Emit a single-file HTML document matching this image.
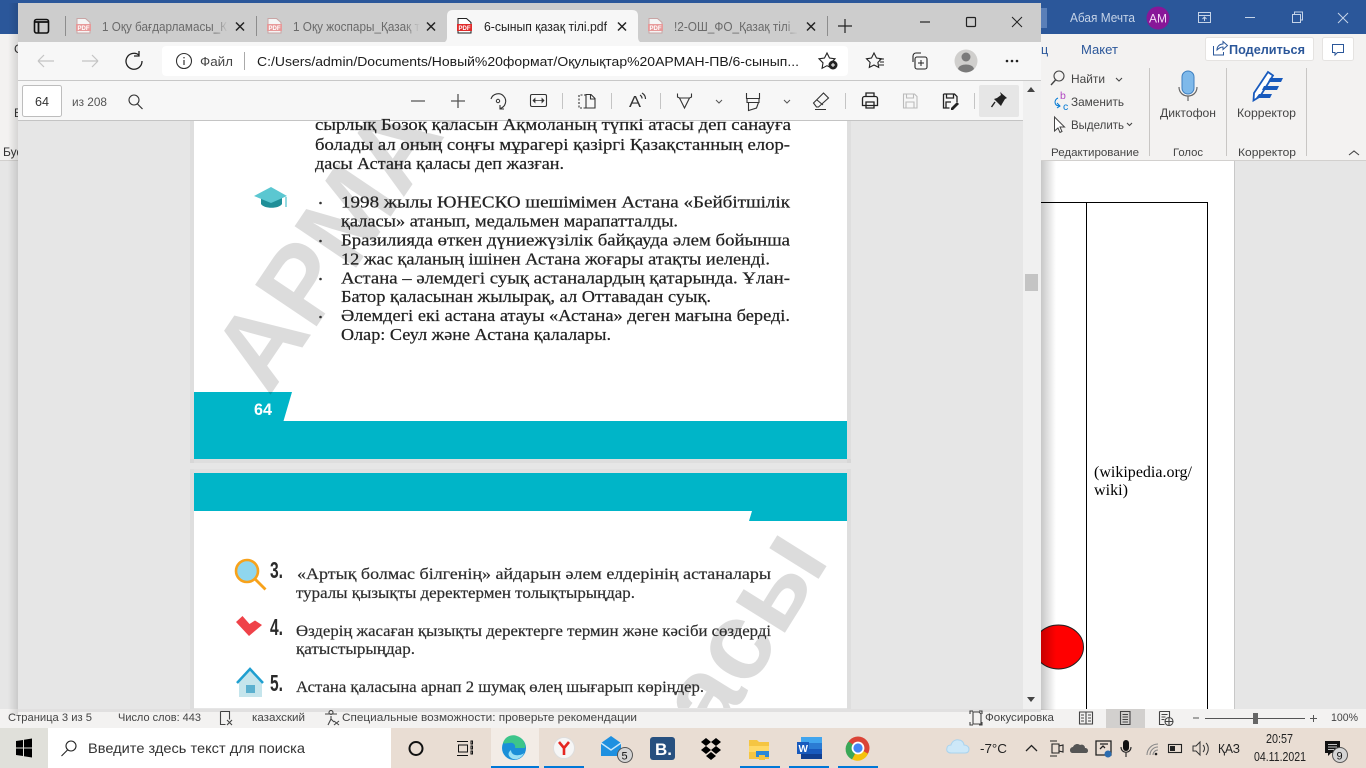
<!DOCTYPE html>
<html lang="ru"><head><meta charset="utf-8"><title>6-сынып қазақ тілі.pdf</title>
<style>
html,body{margin:0;padding:0;width:1366px;height:768px;overflow:hidden;background:#e6e6e6}
svg{display:block;position:absolute;left:0;top:0}
text{font-family:"Liberation Sans","DejaVu Sans",sans-serif;fill:#333;font-size:12px}
.s{font-family:"Liberation Serif","DejaVu Serif",serif;font-size:17px;fill:#222;stroke:#222;stroke-width:.22px;filter:blur(.3px)}
.s2{font-family:"Liberation Serif","DejaVu Serif",serif;font-size:16px;fill:#2c2c2c;stroke:#2c2c2c;stroke-width:.2px;filter:blur(.3px)}
.n{font-weight:bold;font-size:23px;fill:#2b2b2b}
.u{font-size:12px;fill:#444}
.st{font-size:11px;fill:#444}
.tab{font-size:12.5px;fill:#6a6a6a}
.i{fill:none;stroke:#333;stroke-width:1.2}
.il{fill:none;stroke:#444;stroke-width:1.1}
</style></head><body>
<svg width="1366" height="768" viewBox="0 0 1366 768" xmlns="http://www.w3.org/2000/svg">
<defs>
<linearGradient id="sh" x1="0" x2="1" y1="0" y2="0"><stop offset="0" stop-color="#000" stop-opacity=".22"/><stop offset="1" stop-color="#000" stop-opacity="0"/></linearGradient>
<linearGradient id="shl" x1="1" x2="0" y1="0" y2="0"><stop offset="0" stop-color="#000" stop-opacity=".12"/><stop offset="1" stop-color="#000" stop-opacity="0"/></linearGradient>
<linearGradient id="fade" x1="0" x2="1" y1="0" y2="0"><stop offset="0" stop-color="#cdcdcd" stop-opacity="0"/><stop offset="1" stop-color="#cdcdcd"/></linearGradient>
<clipPath id="p1"><rect x="194" y="121" width="653" height="338"/></clipPath>
<clipPath id="p2"><rect x="194" y="473" width="653" height="235"/></clipPath>
</defs>

<!-- Word window background -->
<rect x="0" y="0" width="1366" height="34" fill="#2b579a"/>
<rect x="0" y="34" width="1366" height="126" fill="#f3f2f1"/>
<rect x="0" y="160" width="1366" height="1" fill="#d2d0ce"/>
<rect x="0" y="161" width="1366" height="548" fill="#e6e6e6"/>
<rect x="1041" y="161" width="193" height="548" fill="#fff"/>
<rect x="1234" y="161" width="1" height="548" fill="#c8c8c8"/>
<text x="3" y="156" style="font-size:12px">Буф</text>
<text x="14" y="53" style="font-size:12px">С</text>
<text x="14" y="117" style="font-size:12px">Е</text>

<!-- Word title bar -->
<rect x="1041" y="8" width="6" height="20" fill="#5a7fb8"/>
<text x="1070" y="22" textLength="65" lengthAdjust="spacingAndGlyphs" style="fill:#c6d4e8;font-size:12.5px">Абая Мечта</text>
<circle cx="1158" cy="18" r="11.5" fill="#881798"/>
<text x="1149" y="22.5" textLength="18" lengthAdjust="spacingAndGlyphs" style="fill:#f3dcf5;font-size:11.5px">АМ</text>
<g fill="none" stroke="#c6d4e8" stroke-width="1">
<rect x="1198.5" y="12.5" width="12" height="10"/><path d="M1198.5 15.5h12M1204.5 21v-4M1202.5 19l2-2 2 2"/>
<path d="M1245 17.5h10"/>
<rect x="1292.5" y="14.5" width="8" height="8"/><path d="M1294.5 14.5v-2.5h8v8h-2"/>
<path d="M1338 13l10 10M1348 13l-10 10"/>
</g>

<!-- Word ribbon -->
<text x="1041" y="54" style="fill:#2b579a;font-size:12.5px">ц</text>
<text x="1081" y="54" textLength="37" lengthAdjust="spacingAndGlyphs" style="fill:#2b579a;font-size:12.5px">Макет</text>
<rect x="1205.5" y="37.5" width="108" height="23" rx="2" fill="#fff" stroke="#e5e3e1"/>
<path d="M1213.5 46v9h10v-3M1217 50c0-4 3-6 6-6v-2.5l4.500 4-4.500 4V47c-2 0-4 1-6 3z" fill="none" stroke="#2b579a" stroke-width="1"/>
<text x="1229" y="54" textLength="76" lengthAdjust="spacingAndGlyphs" style="fill:#2b579a;font-size:12.5px;font-weight:bold">Поделиться</text>
<rect x="1322.5" y="37.5" width="31" height="23" rx="2" fill="#fff" stroke="#e5e3e1"/>
<path d="M1332.5 44.5h11v8h-6l-2.500 2.500v-2.500h-2.500z" fill="none" stroke="#2b579a" stroke-width="1"/>

<circle cx="1059" cy="76" r="5" fill="none" stroke="#444" stroke-width="1.100"/><path d="M1055.500 80l-4.500 5" stroke="#444" stroke-width="1.400" fill="none"/>
<text x="1071" y="83" textLength="34" lengthAdjust="spacingAndGlyphs" class="u">Найти</text>
<path d="M1116 78l3 3 3-3" class="il"/>
<text x="1060" y="99" style="fill:#b146c2;font-size:10.500px">b</text>
<text x="1063" y="110" style="fill:#0078d4;font-size:10.500px">c</text>
<path d="M1058 98a5 5 0 0 0-3 4c0 3 2 4 5 4M1057 103l3 3-3 2" fill="none" stroke="#0078d4" stroke-width="1"/>
<text x="1071" y="106" textLength="53" lengthAdjust="spacingAndGlyphs" class="u">Заменить</text>
<path d="M1054.500 117v14l3.500-3 2 4.500 2-1-2-4.500h4.500z" fill="#fff" stroke="#444" stroke-width="1"/>
<text x="1071" y="129" textLength="53" lengthAdjust="spacingAndGlyphs" class="u">Выделить</text>
<path d="M1127 123l2.500 2.500 2.500-2.500" class="il"/>
<text x="1051" y="156" textLength="88" lengthAdjust="spacingAndGlyphs" style="font-size:11px;fill:#444">Редактирование</text>
<text x="1173" y="156" textLength="30" lengthAdjust="spacingAndGlyphs" style="font-size:11px;fill:#444">Голос</text>
<text x="1238" y="156" textLength="58" lengthAdjust="spacingAndGlyphs" style="font-size:11px;fill:#444">Корректор</text>
<rect x="1149" y="68" width="1" height="88" fill="#c8c6c4"/><rect x="1226" y="68" width="1" height="88" fill="#c8c6c4"/><rect x="1306" y="68" width="1" height="88" fill="#c8c6c4"/>
<rect x="1182" y="71" width="12" height="23" rx="6" fill="#7eb9ea" stroke="#3d7fc0" stroke-width="1"/>
<path d="M1179 87c0 12 18 12 18 0M1188 96v5" fill="none" stroke="#666" stroke-width="1.200"/>
<text x="1160" y="117" textLength="56" lengthAdjust="spacingAndGlyphs" class="u">Диктофон</text>
<path d="M1268 72l5 3.500-13 21-6.500 4 .5-7.500z" fill="#fff" stroke="#185abd" stroke-width="1.800"/>
<path d="M1270 78h13l-2 4h-13zM1264 86h15l-2 4h-15zM1259 94h13l-2 4h-14z" fill="#185abd"/>
<text x="1237" y="117" textLength="59" lengthAdjust="spacingAndGlyphs" class="u">Корректор</text>
<path d="M1349 155l5-4 5 4" class="il"/>

<!-- Word document -->
<path d="M1041 202.500H1207.500V709M1086.500 202.500V709" fill="none" stroke="#000" stroke-width="1"/>
<text x="1094" y="477" textLength="98" lengthAdjust="spacingAndGlyphs" style="font-family:'Liberation Serif',serif;font-size:16px;fill:#000">(wikipedia.org/</text>
<text x="1094" y="495" textLength="34" lengthAdjust="spacingAndGlyphs" style="font-family:'Liberation Serif',serif;font-size:16px;fill:#000">wiki)</text>
<ellipse cx="1058.500" cy="647" rx="25" ry="22" fill="#f00" stroke="#222" stroke-width="1"/>

<!-- Status bar -->
<rect x="0" y="709" width="1366" height="19" fill="#f3f2f1"/>
<text x="8" y="721" textLength="84" lengthAdjust="spacingAndGlyphs" class="st">Страница 3 из 5</text>
<text x="118" y="721" textLength="83" lengthAdjust="spacingAndGlyphs" class="st">Число слов: 443</text>
<path d="M220.500 711.500h9v8M220.500 711.500v13h5M227 720l5 5M232 720l-5 5" class="il"/>
<text x="252" y="721" textLength="53" lengthAdjust="spacingAndGlyphs" class="st">казахский</text>
<circle cx="331" cy="712.500" r="2" class="il"/><path d="M325 714h12M331 716v3l-3 6M331 719l3 3M334 721l5 4M339 721l-5 4" class="il"/>
<text x="342" y="721" textLength="295" lengthAdjust="spacingAndGlyphs" class="st">Специальные возможности: проверьте рекомендации</text>
<path d="M970 714v-3h3M970 722v3h3M982 722v3h-3M982 714v-3h-3M973 712h6l2 2v10h-8z" class="il"/>
<text x="985" y="721" textLength="69" lengthAdjust="spacingAndGlyphs" class="st">Фокусировка</text>
<path d="M1079.500 712h6.500v12h-6.500zM1086 712h6.500v12H1086zM1081 715h3M1081 718h3M1081 721h3M1088 715h3M1088 718h3M1088 721h3" class="il"/>
<rect x="1106" y="709" width="39" height="19" fill="#d2d0ce"/>
<path d="M1120.500 711.500h9.500v13h-9.500zM1122.500 714.500h5.500M1122.500 717h5.500M1122.500 719.500h5.500M1122.500 722h5.500" class="il"/>
<path d="M1159.500 711.500h10v6M1159.500 711.500v13h5M1161.500 714.500h6M1161.500 717h4M1161.500 719.500h3" class="il"/><circle cx="1169" cy="721.500" r="4" class="il"/><path d="M1165 721.500h8M1169 717.500v8" class="il"/>
<path d="M1193 718h6M1205 718.500h100M1310 718.500h7M1313.500 715v7" stroke="#555" fill="none" stroke-width="1"/>
<rect x="1253" y="713" width="5" height="11" fill="#666"/>
<text x="1331" y="721" textLength="27" lengthAdjust="spacingAndGlyphs" class="st">100%</text>

<!-- Taskbar -->
<rect x="0" y="728" width="1366" height="40" fill="#e9ddd3"/>
<rect x="0" y="728" width="48" height="40" fill="#e0e0da"/>
<rect x="48" y="728" width="343" height="40" fill="#fff"/>
<path d="M16 741l7-1v7.500h-7zM24 739.800l8-1.300v9h-8zM16 748.500h7v7.500l-7-1zM24 748.500h8v9l-8-1.300z" fill="#000"/>
<circle cx="71" cy="746" r="5" fill="none" stroke="#222" stroke-width="1.100"/><path d="M67.500 750l-6 6" stroke="#222" stroke-width="1.100"/>
<text x="88" y="753" textLength="217" lengthAdjust="spacingAndGlyphs" style="font-size:14px;fill:#333">Введите здесь текст для поиска</text>
<circle cx="416" cy="748.500" r="6.500" fill="none" stroke="#111" stroke-width="2"/>
<path d="M457 741.500h11M457 755.500h11M458.500 745h9v7h-9zM471 741h1.500v3H471zM471 746h1.500v3H471zM471 751h1.500v3H471z" fill="none" stroke="#111" stroke-width="1"/>
<rect x="491" y="728" width="48" height="40" fill="#f3ece6"/>
<rect x="491" y="766" width="48" height="2" fill="#0078d7"/>
<rect x="544" y="766" width="40" height="2" fill="#0078d7"/>
<rect x="740" y="766" width="40" height="2" fill="#0078d7"/>
<rect x="789" y="766" width="40" height="2" fill="#0078d7"/>
<rect x="838" y="766" width="40" height="2" fill="#0078d7"/>
<circle cx="514" cy="748" r="12" fill="#1b8fd8"/>
<path d="M503 743c2-7 9-9 14-7 6 2 9 7 8 12h-10c1-3-2-6-5-5-3 0-6 1-7 0z" fill="#3dc58a"/>
<path d="M511 750c0 4 4 6 8 5 2 0 4-1 5-2-2 5-7 7-11 6-5-2-6-6-2-9z" fill="#9be0f5"/>
<circle cx="564" cy="748" r="10.500" fill="#f6f6f6" stroke="#ddd"/>
<path d="M559 742l5 6v7M569 742l-5 6" fill="none" stroke="#e52620" stroke-width="2.600"/>
<path d="M601 743l10-7 10 7v13h-20z" fill="#1e90e0"/>
<path d="M601 743l10 7 10-7" fill="none" stroke="#c9e8fb" stroke-width="1.400"/>
<circle cx="625" cy="755" r="7.500" fill="#d5d5d5" stroke="#555"/>
<text x="621.500" y="759.500" style="font-size:11px;fill:#111">5</text>
<rect x="650" y="737" width="25" height="23" rx="3" fill="#27507f"/>
<text x="655" y="755" style="font-size:17px;font-weight:bold;fill:#fff">B.</text>
<path d="M701 742l5-4 5 4-5 4zM711 742l5-4 5 4-5 4zM701 750l5-4 5 4-5 4zM711 750l5-4 5 4-5 4zM706 756l5-4 5 4-5 4z" fill="#000"/>
<path d="M749 740h8l2 2h10v17h-20z" fill="#f5c542"/>
<rect x="749" y="746" width="20" height="6" fill="#ffd966"/>
<rect x="756" y="751" width="13" height="6" fill="#2b88d8"/><rect x="759" y="755" width="6" height="5" fill="#f5c542"/>
<rect x="801" y="737" width="21" height="22" fill="#2b7cd3"/>
<rect x="801" y="737" width="21" height="6" fill="#41a5ee"/><rect x="801" y="749" width="21" height="5" fill="#185abd"/><rect x="801" y="754" width="21" height="5" fill="#103f91"/>
<rect x="797" y="742" width="12" height="12" fill="#185abd"/>
<text x="798.500" y="752" style="font-size:10px;font-weight:bold;fill:#fff">W</text>
<circle cx="858" cy="748" r="11.500" fill="#db4437"/>
<path d="M858 748l10 5.800a11.500 11.500 0 0 1-16 5.600z" fill="#f4c20d"/>
<path d="M858 748l-6 11.500a11.500 11.500 0 0 1-3.500-18z" fill="#3aa757"/>
<circle cx="858" cy="748" r="5.500" fill="#4285f4" stroke="#fff" stroke-width="1.800"/>
<path d="M951 753c-3 0-5-2-4-5 0-2 2-3 4-3 1-4 5-6 8-5 3 0 5 3 5 5 3 0 5 2 5 4 0 3-2 4-4 4z" fill="#cde8f8" stroke="#a9d3ee"/>
<text x="980" y="753" textLength="27" lengthAdjust="spacingAndGlyphs" style="font-size:13px;fill:#222">-7°C</text>
<path d="M1026 751l5.500-5.500 5.500 5.500" fill="none" stroke="#222" stroke-width="1.300"/>
<path d="M1050 741h7M1050 756h7M1052 744h7v9h-7zM1059 746l4-1v7l-4-1z" fill="none" stroke="#222" stroke-width="1.100"/>
<path d="M1073 753c-2 0-3-1-3-3s2-3 3-3c1-3 5-4 7-2 2-1 5 0 5 3 2 0 3 1 3 3 0 1-1 2-2 2z" fill="#555"/>
<path d="M1096 741h15v14h-15zM1100 744h8M1100 749l3-3 2 2" fill="none" stroke="#222" stroke-width="1.300"/><circle cx="1108" cy="754" r="3.500" fill="#2b6cb0"/>
<rect x="1123" y="740" width="6" height="11" rx="3" fill="#111"/><path d="M1121 747c0 7 10 7 10 0M1126 752v5" fill="none" stroke="#222" stroke-width="1.100"/>
<path d="M1147 755a11 11 0 0 1 11-11M1150 755a8 8 0 0 1 8-8M1153 755a5 5 0 0 1 5-5" fill="none" stroke="#888" stroke-width="1.100"/><circle cx="1156" cy="754" r="1.300" fill="#222"/>
<rect x="1168.500" y="744.500" width="13" height="8" fill="none" stroke="#222" stroke-width="1.100"/><rect x="1170" y="746" width="5" height="5" fill="#222"/>
<path d="M1193 746h3l4-4v13l-4-4h-3zM1203 745c2 2 2 5 0 7M1206 743c3 3 3 8 0 12" fill="none" stroke="#333" stroke-width="1"/>
<text x="1218" y="753" textLength="22" lengthAdjust="spacingAndGlyphs" style="font-size:12.500px;fill:#222">ҚАЗ</text>
<text x="1266" y="743" textLength="27" lengthAdjust="spacingAndGlyphs" style="font-size:12.500px;fill:#222">20:57</text>
<text x="1254" y="761" textLength="52" lengthAdjust="spacingAndGlyphs" style="font-size:12.500px;fill:#222">04.11.2021</text>
<path d="M1325 741h15v12h-9l-3 3v-3h-3z" fill="#111"/><path d="M1328 744.500h9M1328 747h9M1328 749.500h6" stroke="#fff" stroke-width=".8"/>
<circle cx="1340" cy="755" r="7.500" fill="#d5d5d5" stroke="#555"/>
<text x="1336.500" y="759.500" style="font-size:11px;fill:#111">9</text>

<!-- Edge window -->
<rect x="8" y="3" width="10" height="712" fill="url(#shl)"/>
<rect x="18" y="3" width="1023" height="40" fill="#cdcdcd"/>
<rect x="18" y="42" width="1023" height="39" fill="#f7f7f7"/>
<rect x="18" y="80" width="1023" height="1" fill="#c8c8c8"/>
<rect x="18" y="81" width="1023" height="39" fill="#f7f7f7"/>
<rect x="18" y="120" width="1023" height="1" fill="#c4c4c4"/>
<rect x="18" y="121" width="1023" height="588" fill="#e6e6e6"/>
<rect x="1023" y="81" width="18" height="628" fill="#f0f0f0"/>
<rect x="1041" y="161" width="15" height="549" fill="url(#sh)"/>
<rect x="18" y="709" width="1023" height="3" fill="#000" opacity=".07"/>
<path d="M1027 92l4-5 4 5z" fill="#444"/>
<rect x="1025" y="274" width="13" height="17" fill="#c4c4c4"/>
<path d="M1027 697l4 5 4-5z" fill="#444"/>

<!-- Tabs -->
<rect x="34.500" y="19.500" width="14" height="13.500" rx="2" fill="none" stroke="#111" stroke-width="1.600"/>
<path d="M34.500 22h14M38.500 22v11" fill="none" stroke="#111" stroke-width="1.800"/>
<rect x="65" y="16" width="1" height="20" fill="#8d8d8d"/>
<path d="M77 18.500h8.500l4.500 4v10.500h-13z" fill="#f5f5f5" stroke="#c9a5a5"/><rect x="76" y="24" width="15" height="7" fill="#e79a9a"/><text x="77.500" y="30" style="font-size:6px;font-weight:bold;fill:#fff">PDF</text>
<text x="102" y="31" textLength="125" lengthAdjust="spacingAndGlyphs" class="tab">1 Оқу бағдарламасы_К</text>
<rect x="215" y="16" width="13" height="20" fill="url(#fade)"/>
<path d="M236 22.500l8 8M244 22.500l-8 8" stroke="#222" stroke-width="1.500"/>
<rect x="256" y="16" width="1" height="20" fill="#8d8d8d"/>
<path d="M268 18.500h8.500l4.500 4v10.500h-13z" fill="#f5f5f5" stroke="#c9a5a5"/><rect x="267" y="24" width="15" height="7" fill="#e79a9a"/><text x="268.500" y="30" style="font-size:6px;font-weight:bold;fill:#fff">PDF</text>
<text x="293" y="31" textLength="127" lengthAdjust="spacingAndGlyphs" class="tab">1 Оқу жоспары_Қазақ т</text>
<rect x="405" y="16" width="15" height="20" fill="url(#fade)"/>
<path d="M427 22.500l8 8M435 22.500l-8 8" stroke="#222" stroke-width="1.500"/>
<path d="M441 43c4 0 6-2 6-6V16c0-4 2-6 6-6h179c4 0 6 2 6 6v21c0 4 2 6 6 6z" fill="#f7f7f7"/>
<path d="M458 18.500h8.500l4.500 4v10.500h-13z" fill="#fff" stroke="#222"/><rect x="457" y="24" width="15" height="7" fill="#e02b2b"/><text x="458.500" y="30" style="font-size:6px;font-weight:bold;fill:#fff">PDF</text>
<text x="484" y="31" textLength="123" lengthAdjust="spacingAndGlyphs" style="font-size:12.500px;fill:#222">6-сынып қазақ тілі.pdf</text>
<path d="M618 22.500l8 8M626 22.500l-8 8" stroke="#222" stroke-width="1.500"/>
<path d="M649 18.500h8.500l4.500 4v10.500h-13z" fill="#f5f5f5" stroke="#c9a5a5"/><rect x="648" y="24" width="15" height="7" fill="#e79a9a"/><text x="649.500" y="30" style="font-size:6px;font-weight:bold;fill:#fff">PDF</text>
<text x="674" y="31" textLength="123" lengthAdjust="spacingAndGlyphs" class="tab">!2-ОШ_ФО_Қазақ тілі_</text>
<rect x="785" y="16" width="13" height="20" fill="url(#fade)"/>
<path d="M807 22.500l8 8M815 22.500l-8 8" stroke="#222" stroke-width="1.500"/>
<rect x="827" y="16" width="1" height="20" fill="#8d8d8d"/>
<path d="M838 26h14M845 19v14" stroke="#222" stroke-width="1.200"/>
<path d="M920 22h10" stroke="#222" stroke-width="1.200"/>
<rect x="966.500" y="17.500" width="9" height="9" rx="1" fill="none" stroke="#222" stroke-width="1.200"/>
<path d="M1012 17l10 10M1022 17l-10 10" stroke="#222" stroke-width="1"/>

<!-- Address bar -->
<rect x="162" y="46" width="686" height="30" rx="4" fill="#fff"/>
<path d="M38 61h16M38 61l6-6M38 61l6 6" fill="none" stroke="#c4c4c4" stroke-width="1.200"/>
<path d="M98 61H82M98 61l-6-6M98 61l-6 6" fill="none" stroke="#c4c4c4" stroke-width="1.200"/>
<path d="M139 55a8 8 0 1 0 3 6M139 51v5h-5" fill="none" stroke="#222" stroke-width="1.300"/>
<circle cx="184" cy="61" r="7.500" fill="none" stroke="#333" stroke-width="1.100"/><path d="M184 60v5M184 57v1.400" stroke="#333" stroke-width="1.200"/>
<text x="200" y="66" textLength="33" lengthAdjust="spacingAndGlyphs" style="font-size:12.500px;fill:#444">Файл</text>
<rect x="244" y="52" width="1" height="18" fill="#aaa"/>
<text x="257" y="66" textLength="542" lengthAdjust="spacingAndGlyphs" style="font-size:12.500px;fill:#1c1c1c">C:/Users/admin/Documents/Новый%20формат/Оқулықтар%20АРМАН-ПВ/6-сынып...</text>
<path d="M827 53l2.500 5 5.500 .8-4 4 .9 5.500-4.900-2.600-4.900 2.600 .9-5.500-4-4 5.500-.8z" fill="none" stroke="#222" stroke-width="1.100"/><circle cx="833" cy="65" r="4.500" fill="#222"/><path d="M831 65h4M833 63v4" stroke="#fff"/>
<path d="M874 53l2.500 5 5 .8-3.600 3.600 .8 5-4.700-2.400-4.700 2.400 .8-5-3.600-3.600 5-.8z" fill="none" stroke="#222" stroke-width="1.100"/><path d="M879 59h5M880 62h4M879 65h5" stroke="#222"/>
<path d="M913 62v-6a3 3 0 0 1 3-3h5" fill="none" stroke="#222" stroke-width="1.100"/><rect x="915" y="57" width="12" height="12" rx="2" fill="none" stroke="#222" stroke-width="1.100"/><path d="M921 60v6M918 63h6" stroke="#222"/>
<circle cx="966" cy="61" r="11.500" fill="#d0cfcd"/><circle cx="966" cy="57" r="4.500" fill="#7a7a7a"/><path d="M958 69c1-6 15-6 16 0a11 11 0 0 1-16 0z" fill="#7a7a7a"/>
<circle cx="1007" cy="61" r="1.300" fill="#222"/><circle cx="1012" cy="61" r="1.300" fill="#222"/><circle cx="1017" cy="61" r="1.300" fill="#222"/>

<!-- PDF toolbar -->
<rect x="22.500" y="85.500" width="39" height="31" rx="2" fill="#fff" stroke="#bdbdbd"/>
<text x="35" y="106" textLength="14" lengthAdjust="spacingAndGlyphs" style="font-size:12.500px;fill:#333">64</text>
<text x="72" y="106" textLength="35" lengthAdjust="spacingAndGlyphs" style="font-size:12px;fill:#555">из 208</text>
<circle cx="134" cy="100" r="5" fill="none" stroke="#333" stroke-width="1.100"/><path d="M137.500 104l5 5" stroke="#333" stroke-width="1.200"/>
<path d="M411 101h14M451 101h14M458 94v14" stroke="#555" stroke-width="1.300"/>
<path d="M491 99a7.500 7.500 0 1 1 9 9.500M500 105v4h4" fill="none" stroke="#333" stroke-width="1.100"/><circle cx="498" cy="101" r="1.700" fill="none" stroke="#333"/>
<rect x="530.500" y="94.500" width="16" height="12" rx="1.500" fill="none" stroke="#333" stroke-width="1.100"/><path d="M533 100.500h11M533 100.500l2-2v4zM544 100.500l-2-2v4z" fill="#333" stroke="#333" stroke-width=".8"/>
<path d="M562.500 93v16M611.500 93v16M660.500 93v16M845.500 93v16M974.500 93v16" stroke="#c4c4c4"/>
<path d="M586 95h-7v13h7" fill="none" stroke="#333" stroke-dasharray="2 1.500" stroke-width="1.100"/><path d="M586 94.500h5l4 4v9.500h-9zM590.500 94.500v4.500h4.500" fill="none" stroke="#333" stroke-width="1.100"/>
<text x="629" y="107" style="font-size:16px;fill:#333" textLength="12" lengthAdjust="spacingAndGlyphs">A</text>
<path d="M640 95c1.500 1 2 2 2 3.500M642 93c2.500 1.500 3.500 3.500 3.500 6" fill="none" stroke="#333" stroke-width="1.200"/>
<path d="M677.500 93.500v3.500l2 1h10l2-1v-3.500M679.500 98l5 10 5-10" fill="none" stroke="#333" stroke-width="1.100"/>
<path d="M716 100l3 3 3-3M784 100l3 3 3-3" fill="none" stroke="#555"/>
<path d="M746.500 93v5.500h13V93M747 98.500v4h12v-4M748.500 102.500v8l8-2.500 2-5.500" fill="none" stroke="#333" stroke-width="1.100"/>
<path d="M813.500 103l10-10 5 5-10 9h-2zM817 100l6 5M815 109.500h11" fill="none" stroke="#333" stroke-width="1.100"/>
<path d="M866 96v-3h8v3M862.500 98.500a2 2 0 0 1 2-2h11a2 2 0 0 1 2 2v7h-15zM866 102h8v6h-8z" fill="none" stroke="#222" stroke-width="1.300"/>
<path d="M903.500 94h11l2.500 2.500V108h-13.500zM906.500 94v4h7v-4M906 108v-6h8v6" fill="none" stroke="#bbb" stroke-width="1.100"/>
<path d="M943.500 94h11l2.500 2.500V102M943.500 94v14h6M946.500 94v4h7v-4M946 108v-6h5" fill="none" stroke="#222" stroke-width="1.300"/>
<path d="M951 108l6-6 2 2-6 6h-2z" fill="#222"/>
<rect x="979" y="85" width="40" height="32" rx="2" fill="#e6e6e6"/>
<path d="M1000 92l7 6-2 1-3 5-1 2-7-7 3-1 4-3z" fill="#222"/><path d="M995 102l-3.500 5" stroke="#222" stroke-width="1.400"/>

<!-- PDF page 1 -->
<rect x="190" y="121" width="4" height="342" fill="#000" opacity=".03"/>
<rect x="847" y="121" width="4" height="342" fill="#000" opacity=".03"/>
<rect x="190" y="459" width="661" height="4" fill="#000" opacity=".03"/>
<rect x="194" y="121" width="653" height="338" fill="#fff"/>
<path d="M194 392H292L283.500 421H847V459H194z" fill="#00b5c8"/>
<g clip-path="url(#p1)"><text transform="translate(269 397) rotate(-56)" style="font-size:108px;font-weight:bold;fill:#000;opacity:.135">АРМАН</text></g>
<text x="254" y="415" textLength="18" lengthAdjust="spacingAndGlyphs" style="font-size:17px;font-weight:bold;fill:#fff">64</text>
<text class="s" x="315" y="130" textLength="476" lengthAdjust="spacingAndGlyphs">сырлық Бозоқ қаласын Ақмоланың түпкі атасы деп санауға</text>
<text class="s" x="315" y="150" textLength="475" lengthAdjust="spacingAndGlyphs">болады ал оның соңғы мұрагері қазіргі Қазақстанның елор-</text>
<text class="s" x="315" y="169" textLength="249" lengthAdjust="spacingAndGlyphs">дасы Астана қаласы деп жазған.</text>
<path d="M261 196v8c3 5 18 5 21 0v-8z" fill="#1f8f98"/>
<path d="M254 196l17-9 16 9-16 7z" fill="#5bc7d1"/><path d="M286 197v10" stroke="#5bc7d1" stroke-width="1.300"/>
<g fill="#333"><circle cx="320.500" cy="203" r="1.300"/><circle cx="320.500" cy="241" r="1.300"/><circle cx="320.500" cy="279" r="1.300"/><circle cx="320.500" cy="317" r="1.300"/></g>
<text class="s" x="341" y="207.500" textLength="449" lengthAdjust="spacingAndGlyphs">1998 жылы ЮНЕСКО шешімімен Астана «Бейбітшілік</text>
<text class="s" x="341" y="226.500" textLength="337" lengthAdjust="spacingAndGlyphs">қаласы» атанып, медальмен марапатталды.</text>
<text class="s" x="341" y="245.500" textLength="449" lengthAdjust="spacingAndGlyphs">Бразилияда өткен дүниежүзілік байқауда әлем бойынша</text>
<text class="s" x="341" y="264.500" textLength="429" lengthAdjust="spacingAndGlyphs">12 жас қаланың ішінен Астана жоғары атақты иеленді.</text>
<text class="s" x="341" y="283.500" textLength="449" lengthAdjust="spacingAndGlyphs">Астана – әлемдегі суық астаналардың қатарында. Ұлан-</text>
<text class="s" x="341" y="302" textLength="370" lengthAdjust="spacingAndGlyphs">Батор қаласынан жылырақ, ал Оттавадан суық.</text>
<text class="s" x="341" y="321" textLength="449" lengthAdjust="spacingAndGlyphs">Әлемдегі екі астана атауы «Астана» деген мағына береді.</text>
<text class="s" x="341" y="340" textLength="270" lengthAdjust="spacingAndGlyphs">Олар: Сеул және Астана қалалары.</text>

<!-- PDF page 2 -->
<rect x="190" y="469" width="4" height="240" fill="#000" opacity=".03"/>
<rect x="847" y="469" width="4" height="240" fill="#000" opacity=".03"/>
<rect x="194" y="469" width="653" height="4" fill="#000" opacity=".02"/>
<rect x="194" y="473" width="653" height="235" fill="#fff"/>
<path d="M194 473H847V521H749L752 511H194z" fill="#00b5c8"/>
<g clip-path="url(#p2)"><text transform="translate(716 743) rotate(-58)" style="font-size:110px;font-weight:bold;fill:#000;opacity:.135">асы</text></g>
<circle cx="247" cy="571" r="11" fill="#8fd6ee" stroke="#f7a21b" stroke-width="2.600"/><path d="M255 579l10.500 10.500" stroke="#f7a21b" stroke-width="2.800"/>
<text class="n" x="270" y="578" textLength="13" lengthAdjust="spacingAndGlyphs">3.</text>
<text class="s2" x="297" y="579" textLength="474" lengthAdjust="spacingAndGlyphs">«Артық болмас білгенің» айдарын әлем елдерінің астаналары</text>
<text class="s2" x="296" y="598" textLength="339" lengthAdjust="spacingAndGlyphs">туралы қызықты деректермен толықтырыңдар.</text>
<path d="M236 622l6.500-6 7 8 5.500-3.500 7 4.500-13 11z" fill="#ef4249"/>
<text class="n" x="270" y="635" textLength="13" lengthAdjust="spacingAndGlyphs">4.</text>
<text class="s2" x="296" y="636" textLength="475" lengthAdjust="spacingAndGlyphs">Өздерің жасаған қызықты деректерге термин және кәсіби сөздерді</text>
<text class="s2" x="296" y="654" textLength="119" lengthAdjust="spacingAndGlyphs">қатыстырыңдар.</text>
<rect x="239" y="681" width="23" height="16" fill="#c5e5ec"/><path d="M239 681l11-11 12 11v2h-23z" fill="#c5e5ec"/>
<rect x="246" y="685" width="9" height="8" fill="#5bb0cf"/>
<path d="M237 683l13-14 13 14" fill="none" stroke="#1f9fd0" stroke-width="2.500"/>
<text class="n" x="270" y="691" textLength="13" lengthAdjust="spacingAndGlyphs">5.</text>
<text class="s2" x="296" y="692" textLength="408" lengthAdjust="spacingAndGlyphs">Астана қаласына арнап 2 шумақ өлең шығарып көріңдер.</text>
</svg>
</body></html>
